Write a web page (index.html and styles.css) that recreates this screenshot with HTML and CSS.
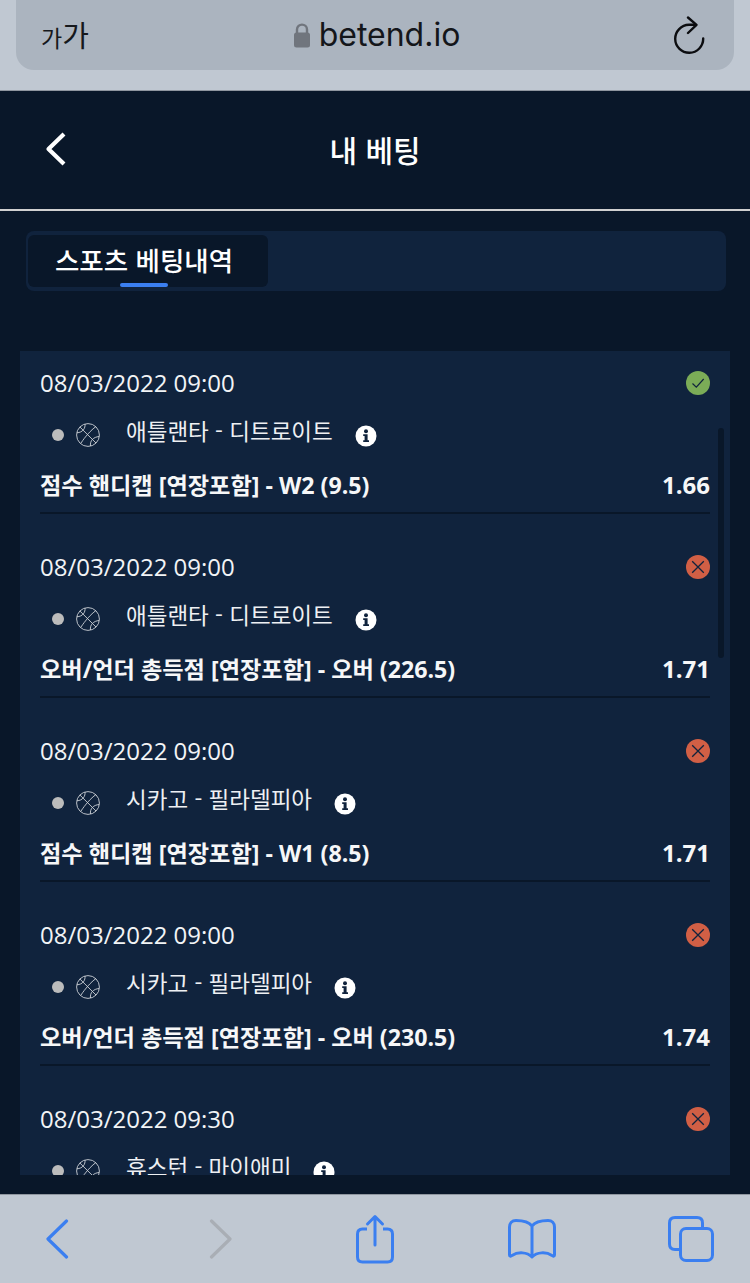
FILE: index.html
```html
<!doctype html>
<html lang="ko">
<head>
  <meta charset="utf-8">
  <title>내 베팅</title>
  <link rel="stylesheet" href="styles.css">
</head>
<body>

<svg class="defs" width="0" height="0">
  <symbol id="ball" viewBox="0 0 24 24">
    <g fill="none" stroke="#cdd1d7" stroke-width="0.900">
      <circle cx="12" cy="12" r="11.400"/>
      <path d="M3.900 4 L20 20"/>
      <path d="M19.800 3.700 C15 7 9 14 5 20"/>
      <path d="M9 1 C9.500 5 7 9.500 .8 9.800"/>
      <path d="M23.200 13.500 C17.500 14 13.800 17.500 14.500 23"/>
    </g>
  </symbol>
  <symbol id="info" viewBox="0 0 22 22">
    <circle cx="11" cy="11" r="10.500" fill="#fff"/>
    <circle cx="11" cy="6.200" r="2" fill="#10233d"/>
    <path d="M8.200 9.300 H12.600 V15.200 H14 V17 H8.200 V15.200 H9.600 V11.100 H8.200 Z" fill="#10233d"/>
  </symbol>
  <symbol id="won" viewBox="0 0 24 24">
    <circle cx="12" cy="12" r="12" fill="#7bac57"/>
    <path d="M6.500 12.500 L10.300 16.200 L17.700 8" fill="none" stroke="#10233d" stroke-width="1.200"/>
  </symbol>
  <symbol id="lost" viewBox="0 0 24 24">
    <circle cx="12" cy="12" r="12" fill="#d15f45"/>
    <path d="M6.200 6.200 L17.800 17.800 M17.800 6.200 L6.200 17.800" fill="none" stroke="#10233d" stroke-width="1.300"/>
  </symbol>
</svg>

<div class="safari-top">
  <div class="url-pill">
    <span class="aa"><span class="aa-small">가</span>가</span>
    <span class="url">
      <svg class="lock" width="18" height="26" viewBox="0 0 18 26">
        <path d="M4 12 V7.500 C4 1 14 1 14 7.500 V12" fill="none" stroke="#70757d" stroke-width="2.400"/>
        <rect x="1" y="10.500" width="16" height="15" rx="2.500" fill="#70757d"/>
      </svg>
      betend.io
    </span>
    <svg class="reload" width="32" height="38" viewBox="0 0 32 38">
      <path d="M29.200 22.500 A14 14 0 1 1 15 8.800 H21" fill="none" stroke="#0c0d10" stroke-width="2.400" stroke-linecap="round"/>
      <path d="M14 1.500 L22.500 8.800 L14 17" fill="none" stroke="#0c0d10" stroke-width="2.400" stroke-linecap="round" stroke-linejoin="round"/>
    </svg>
  </div>
</div>

<div class="page">
  <header class="page-head">
    <svg class="back" width="22" height="34" viewBox="0 0 22 34">
      <path d="M19 2 L3.500 17 L19 32" fill="none" stroke="#fff" stroke-width="4.200" stroke-linejoin="round"/>
    </svg>
    <h1>내 베팅</h1>
  </header>

  <div class="tabs">
    <div class="tab">스포츠 베팅내역</div>
  </div>

  <div class="bets">
    <div class="scroll-thumb"></div>

    <div class="bet">
      <div class="bet-top"><span>08/03/2022 09:00</span><svg class="status"><use href="#won"/></svg></div>
      <div class="bet-match">
        <span class="dot"></span><svg class="ball"><use href="#ball"/></svg>
        <span class="teams">애틀랜타 - 디트로이트</span><svg class="info"><use href="#info"/></svg>
      </div>
      <div class="bet-pick"><span>점수 핸디캡 [연장포함] - W2 (9.5)</span><span class="odds">1.66</span></div>
    </div>

    <div class="bet">
      <div class="bet-top"><span>08/03/2022 09:00</span><svg class="status"><use href="#lost"/></svg></div>
      <div class="bet-match">
        <span class="dot"></span><svg class="ball"><use href="#ball"/></svg>
        <span class="teams">애틀랜타 - 디트로이트</span><svg class="info"><use href="#info"/></svg>
      </div>
      <div class="bet-pick"><span>오버/언더 총득점 [연장포함] - 오버 (226.5)</span><span class="odds">1.71</span></div>
    </div>

    <div class="bet">
      <div class="bet-top"><span>08/03/2022 09:00</span><svg class="status"><use href="#lost"/></svg></div>
      <div class="bet-match">
        <span class="dot"></span><svg class="ball"><use href="#ball"/></svg>
        <span class="teams">시카고 - 필라델피아</span><svg class="info"><use href="#info"/></svg>
      </div>
      <div class="bet-pick"><span>점수 핸디캡 [연장포함] - W1 (8.5)</span><span class="odds">1.71</span></div>
    </div>

    <div class="bet">
      <div class="bet-top"><span>08/03/2022 09:00</span><svg class="status"><use href="#lost"/></svg></div>
      <div class="bet-match">
        <span class="dot"></span><svg class="ball"><use href="#ball"/></svg>
        <span class="teams">시카고 - 필라델피아</span><svg class="info"><use href="#info"/></svg>
      </div>
      <div class="bet-pick"><span>오버/언더 총득점 [연장포함] - 오버 (230.5)</span><span class="odds">1.74</span></div>
    </div>

    <div class="bet">
      <div class="bet-top"><span>08/03/2022 09:30</span><svg class="status"><use href="#lost"/></svg></div>
      <div class="bet-match">
        <span class="dot"></span><svg class="ball"><use href="#ball"/></svg>
        <span class="teams">휴스턴 - 마이애미</span><svg class="info"><use href="#info"/></svg>
      </div>
    </div>
  </div>
</div>

<nav class="safari-bottom">
  <svg width="24" height="40" viewBox="0 0 24 40"><path d="M21.500 2 L3 20 L21.500 38" fill="none" stroke="#3b7ff0" stroke-width="3.200" stroke-linecap="round" stroke-linejoin="round"/></svg>
  <svg width="24" height="40" viewBox="0 0 24 40"><path d="M2.500 2 L21 20 L2.500 38" fill="none" stroke="#a9aeb5" stroke-width="3.200" stroke-linecap="round" stroke-linejoin="round"/></svg>
  <svg width="38" height="50" viewBox="0 0 38 50">
    <path d="M11 15 H6.500 Q1.500 15 1.500 20 V43 Q1.500 48 6.500 48 H31.500 Q36.500 48 36.500 43 V20 Q36.500 15 31.500 15 H27" fill="none" stroke="#3b7ff0" stroke-width="3"/>
    <path d="M19 31 V3 M11.500 10 L19 2.500 L26.500 10" fill="none" stroke="#3b7ff0" stroke-width="3" stroke-linecap="round" stroke-linejoin="round"/>
  </svg>
  <svg width="48" height="40" viewBox="0 0 48 40">
    <path d="M24 7 C21 3 15 1.500 8 1.500 C4 1.500 1.500 4 1.500 8 V36 C1.500 37.500 3 37.500 4 36.500 C10 32.500 19 33 24 38 C29 33 38 32.500 44 36.500 C45 37.500 46.500 37.500 46.500 36 V8 C46.500 4 44 1.500 40 1.500 C33 1.500 27 3 24 7 Z M24 7 V38" fill="none" stroke="#3b7ff0" stroke-width="3" stroke-linejoin="round"/>
  </svg>
  <svg width="46" height="46" viewBox="0 0 46 46">
    <path d="M12 33.500 H7 Q1.500 33.500 1.500 28 V7 Q1.500 1.500 7 1.500 H29 Q34.500 1.500 34.500 7 V12" fill="none" stroke="#3b7ff0" stroke-width="3"/>
    <rect x="12.500" y="12.500" width="32" height="32" rx="5.500" fill="none" stroke="#3b7ff0" stroke-width="3"/>
  </svg>
</nav>

</body>
</html>
```

FILE: styles.css
```css
html, body {
  margin: 0;
  padding: 0;
}

body {
  width: 750px;
  height: 1283px;
  overflow: hidden;
  background-color: #091729;
  font-family: "Open Sans", "Noto Sans CJK KR", sans-serif;
  color: #fff;
  display: flex;
  flex-direction: column;
}

.defs {
  position: absolute;
}

/* browser chrome, top */

.safari-top {
  height: 91px;
  flex: none;
  box-sizing: border-box;
  padding: 0 16px;
  background-color: #c0c8d2;
  border-bottom: 1px solid #8f969f;
}

.url-pill {
  height: 70px;
  border-radius: 0 0 18px 18px;
  background-color: #abb4bf;
  display: grid;
  grid-template-columns: 1fr auto 1fr;
  align-items: center;
  padding: 0 28px 0 25px;
}

.aa {
  font-family: "Noto Sans CJK KR", sans-serif;
  font-size: 29px;
  line-height: 36px;
  color: #16181c;
}

.aa-small {
  font-size: 23px;
}

.url {
  display: flex;
  align-items: center;
  gap: 8px;
  margin-left: 6px;
  font-family: "Inter", "Liberation Sans", sans-serif;
  font-size: 32px;
  line-height: 40px;
  color: #14161a;
}

.reload {
  justify-self: end;
}

/* page */

.page {
  flex: none;
  height: 1103px;
  display: flex;
  flex-direction: column;
}

.page-head {
  height: 118px;
  flex: none;
  display: flex;
  align-items: center;
  justify-content: center;
  position: relative;
  background-color: #091729;
  border-bottom: 2px solid #d0d0d0;
}

.page-head h1 {
  margin: 0 0 2px;
  font-family: "Noto Sans CJK KR", sans-serif;
  font-size: 30px;
  font-weight: 500;
  line-height: 40px;
}

.back {
  position: absolute;
  left: 45px;
  top: 41px;
}

.tabs {
  margin: 20px 24px 0 26px;
  height: 60px;
  flex: none;
  box-sizing: border-box;
  padding: 4px 2px;
  border-radius: 8px;
  background-color: #10233d;
}

.tab {
  width: 240px;
  height: 52px;
  box-sizing: border-box;
  padding-right: 8px;
  border-radius: 6px;
  background-color: #091729;
  font-family: "Noto Sans CJK KR", sans-serif;
  font-size: 26.500px;
  font-weight: 500;
  line-height: 50px;
  text-align: center;
  position: relative;
}

.tab::after {
  content: "";
  position: absolute;
  left: 92px;
  bottom: 0;
  width: 48px;
  height: 4px;
  border-radius: 2px;
  background-color: #3b7ff0;
}

.bets {
  margin: 60px 20px 0;
  height: 824px;
  flex: none;
  overflow: hidden;
  position: relative;
  background-color: #10233d;
}

.scroll-thumb {
  position: absolute;
  right: 6px;
  top: 77px;
  width: 6px;
  height: 230px;
  border-radius: 3px;
  background-color: #091729;
}

.bet {
  height: 184px;
  box-sizing: border-box;
  padding: 16px 20px 0;
}

.bet-top {
  height: 32px;
  display: flex;
  justify-content: space-between;
  align-items: center;
  font-size: 24px;
  line-height: 32px;
  color: #f2f4f6;
}

.status {
  width: 24px;
  height: 24px;
  margin-top: -1px;
}

.bet-match {
  height: 32px;
  margin-top: 15px;
  padding-left: 12px;
  display: flex;
  align-items: center;
}

.dot {
  width: 12px;
  height: 12px;
  border-radius: 50%;
  background-color: #bcbcbc;
  margin-top: 10px;
}

.ball {
  width: 24px;
  height: 24px;
  margin: 10px 0 0 12px;
}

.teams {
  margin-left: 26px;
  font-family: "Noto Sans CJK KR", sans-serif;
  font-size: 22.500px;
  font-weight: 400;
  line-height: 32px;
  color: #eef0f3;
}

.info {
  width: 22px;
  height: 22px;
  margin: 11px 0 0 22px;
}

.bet-pick {
  height: 45px;
  margin-top: 21px;
  border-bottom: 2px solid #091729;
  display: flex;
  justify-content: space-between;
  font-size: 23.200px;
  font-weight: 700;
  line-height: 36px;
  color: #f6f7f8;
}

.odds {
  font-size: 24px;
}

/* browser chrome, bottom */

.safari-bottom {
  flex: none;
  height: 89px;
  box-sizing: border-box;
  padding-left: 45px;
  border-top: 1px solid #8f969f;
  background-color: #c0c8d2;
  display: grid;
  grid-template-columns: 164px 147px 152px 160px 1fr;
  align-items: center;
}
```
